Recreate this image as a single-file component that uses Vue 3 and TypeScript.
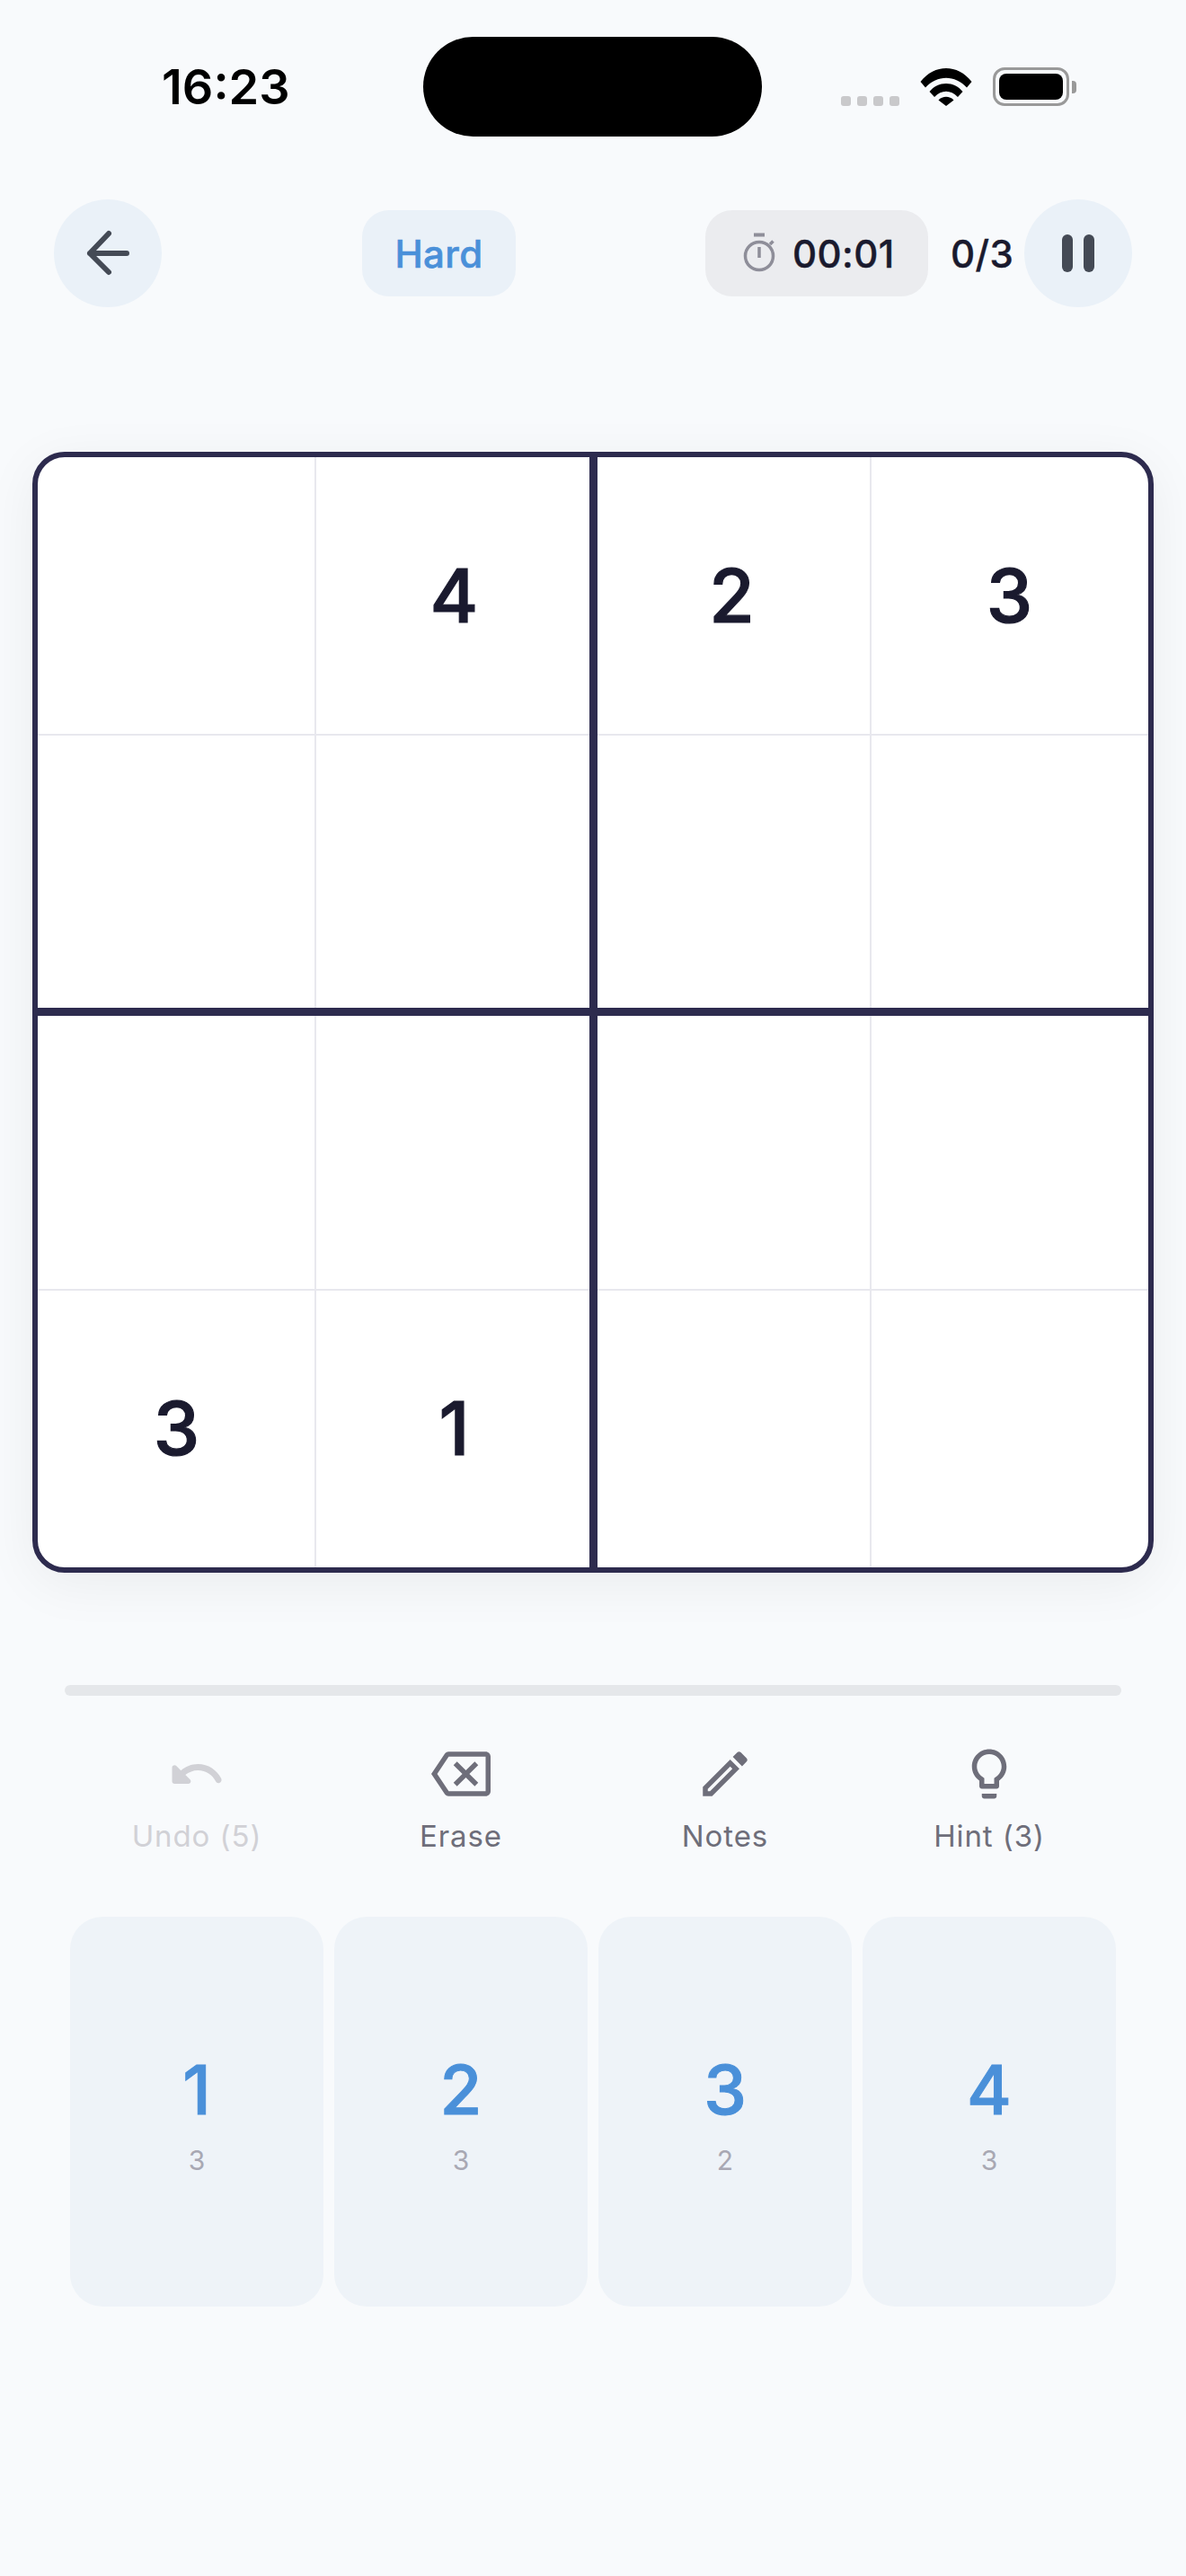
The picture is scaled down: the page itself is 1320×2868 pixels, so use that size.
<script setup lang="ts">
const board: number[] = [
  0, 4, 2, 3,
  0, 0, 0, 0,
  0, 0, 0, 0,
  3, 1, 0, 0,
]

const actions = [
  { label: 'Undo (5)', off: true, d: 'M12.5 8c-2.65 0-5.05 1-6.9 2.6L3.71 8.71C3.08 8.08 2 8.52 2 9.41V15c0 .55.45 1 1 1h5.59c.89 0 1.34-1.08.71-1.71l-1.91-1.91c1.39-1.16 3.16-1.88 5.12-1.88 3.16 0 5.88 1.84 7.16 4.5.27.56.91.84 1.5.64.71-.23 1.07-1.04.75-1.72C20.23 10.42 16.65 8 12.5 8z' },
  { label: 'Erase', off: false, d: 'M22 3H7c-.69 0-1.23.35-1.59.88L0 12l5.41 8.11c.36.53.9.89 1.59.89h15c1.1 0 2-.9 2-2V5c0-1.1-.9-2-2-2zm0 16H7.07L2.4 12l4.66-7H22v14zm-11.59-2L14 13.41 17.59 17 19 15.59 15.41 12 19 8.41 17.59 7 14 10.59 10.41 7 9 8.41 12.59 12 9 15.59z' },
  { label: 'Notes', off: false, d: 'M14.06 9.02l.92.92L5.92 19H5v-.92l9.06-9.06M17.66 3c-.25 0-.51.1-.7.29l-1.83 1.83 3.75 3.75 1.83-1.83c.39-.39.39-1.02 0-1.41l-2.34-2.34c-.2-.2-.45-.29-.71-.29zm-3.6 3.19L3 17.25V21h3.75L17.81 9.94l-3.75-3.75z' },
  { label: 'Hint (3)', off: false, d: 'M9 21c0 .55.45 1 1 1h4c.55 0 1-.45 1-1v-1H9v1zm3-19C8.14 2 5 5.14 5 9c0 2.38 1.19 4.47 3 5.74V17c0 .55.45 1 1 1h6c.55 0 1-.45 1-1v-2.26c1.81-1.27 3-3.36 3-5.74 0-3.86-3.14-7-7-7zm2.85 11.1l-.85.6V16h-4v-2.3l-.85-.6C7.8 12.16 7 10.63 7 9c0-2.76 2.24-5 5-5s5 2.24 5 5c0 1.63-.8 3.16-2.15 4.1z' },
]

const keys = [
  { n: 1, left: 3 },
  { n: 2, left: 3 },
  { n: 3, left: 2 },
  { n: 4, left: 3 },
]
</script>

<template>
  <div class="screen">
    <div class="status">
      <span class="time">16:23</span>
      <div class="island"></div>
      <div class="status-right">
        <div class="signal"><i></i><i></i><i></i><i></i></div>
        <svg class="wifi" width="58" height="43" viewBox="0 0 58 43">
          <path d="M0.5 16 C16 -4 42 -4 57.5 16 L52 22.5 C39 8 19 8 6 22.5 Z" fill="#000" />
          <path d="M10.5 27 C20 15 38 15 47.5 27 L42 33 C34 24.5 24 24.5 16 33 Z" fill="#000" />
          <path d="M20.5 36.5 C25 31.5 33 31.5 37.5 36.5 L29 43 Z" fill="#000" />
        </svg>
        <div class="battery"><div class="battery-fill"></div></div>
        <div class="battery-nub"></div>
      </div>
    </div>

    <div class="header">
      <button class="round">
        <svg width="72" height="72" viewBox="0 0 72 72" fill="none" stroke="#444a55" stroke-width="6" stroke-linecap="round" stroke-linejoin="round">
          <path d="M57 36H16M37 14 16 36 37 57" />
        </svg>
      </button>
      <div class="level">Hard</div>
      <div class="header-right">
        <div class="timer">
          <svg width="48" height="48" viewBox="0 0 48 48" fill="none" stroke="#8e8e99" stroke-width="3.5">
            <circle cx="24" cy="27" r="15.5" />
            <path d="M24 17V29" />
            <path d="M18 3.5H30" stroke-width="4" />
            <path d="M36 14 39.5 10.5" />
          </svg>
          <span>00:01</span>
        </div>
        <span class="mistakes">0/3</span>
        <button class="round pause"><i></i><i></i></button>
      </div>
    </div>

    <div class="board">
      <div v-for="(v, i) in board" :key="i" class="cell">{{ v || '' }}</div>
      <div class="bar-v"></div>
      <div class="bar-h"></div>
    </div>

    <div class="progress"></div>

    <div class="actions">
      <div v-for="a in actions" :key="a.label" class="action" :class="{ off: a.off }">
        <svg width="66" height="66" viewBox="0 0 24 24" fill="currentColor"><path :d="a.d" /></svg>
        <span>{{ a.label }}</span>
      </div>
    </div>

    <div class="keys">
      <div v-for="k in keys" :key="k.n" class="key">
        <span class="key-num">{{ k.n }}</span>
        <span class="key-left">{{ k.left }}</span>
      </div>
    </div>
  </div>
</template>

<style>
html, body {
  background: #f8fafc;
}
</style>

<style scoped>
.screen {
  height: 2868px;
  background: #f8fafc;
  font-family: Inter, "Liberation Sans", sans-serif;
  color: #1a1a2e;
  overflow: hidden;
}

.status {
  position: relative;
  height: 222px;
  box-sizing: border-box;
  padding: 0 122px 0 180px;
  display: flex;
  justify-content: space-between;
}
.time {
  margin-top: 65px;
  height: 63px;
  line-height: 63px;
  font-size: 54px;
  font-weight: 600;
  color: #000;
}
.island {
  position: absolute;
  left: 471px;
  top: 41px;
  width: 377px;
  height: 111px;
  border-radius: 56px;
  background: #000;
}
.status-right {
  margin-top: 75px;
  height: 43px;
  display: flex;
  align-items: flex-end;
}
.signal {
  display: flex;
  gap: 7px;
  margin-right: 23px;
}
.signal i {
  width: 11px;
  height: 11px;
  border-radius: 3px;
  background: #c9c9cb;
}
.wifi {
  margin-right: 23px;
}
.battery {
  width: 85px;
  height: 43px;
  box-sizing: border-box;
  border: 3px solid #999;
  border-radius: 13px;
  padding: 4px;
}
.battery-fill {
  height: 100%;
  border-radius: 8px;
  background: #000;
}
.battery-nub {
  width: 5px;
  height: 14px;
  margin: 0 0 14px 3px;
  border-radius: 0 4px 4px 0;
  background: #999;
}

.header {
  height: 120px;
  padding: 0 60px;
  display: flex;
  align-items: center;
  justify-content: space-between;
}
.round {
  width: 120px;
  height: 120px;
  padding: 0;
  border: 0;
  border-radius: 50%;
  background: #eaf1f8;
  display: flex;
  align-items: center;
  justify-content: center;
}
.level {
  margin-left: 12px;
  width: 171px;
  height: 96px;
  border-radius: 30px;
  background: #eaf1f8;
  color: #4a90d9;
  font-size: 42px;
  font-weight: 500;
  letter-spacing: 0.4px;
  -webkit-text-stroke: 0.6px #4a90d9;
  display: flex;
  align-items: center;
  justify-content: center;
}
.header-right {
  display: flex;
  align-items: center;
}
.timer {
  width: 248px;
  height: 96px;
  box-sizing: border-box;
  padding-left: 36px;
  border-radius: 30px;
  background: #ebecef;
  display: flex;
  align-items: center;
  gap: 13px;
  font-size: 42px;
  font-weight: 500;
  letter-spacing: 0.4px;
  -webkit-text-stroke: 0.4px #1a1a2e;
}
.mistakes {
  margin: 0 12px 0 25px;
  width: 70px;
  font-size: 42px;
  font-weight: 500;
  letter-spacing: 0.4px;
  -webkit-text-stroke: 0.4px #1a1a2e;
}
.pause {
  gap: 12px;
}
.pause i {
  width: 12px;
  height: 42px;
  border-radius: 6px;
  background: #444a55;
}

.board {
  position: relative;
  width: 1248px;
  height: 1248px;
  box-sizing: border-box;
  margin: 161px 36px 0;
  border: 6px solid #2d2b4e;
  border-radius: 36px;
  background: #fff;
  box-shadow: 0 12px 60px rgba(0, 0, 0, 0.06);
  display: grid;
  grid-template-columns: repeat(4, 309px);
  grid-template-rows: repeat(4, 309px);
}
.cell {
  position: relative;
  display: flex;
  align-items: center;
  justify-content: center;
  font-size: 82px;
  font-weight: 500;
  -webkit-text-stroke: 1.2px #1a1a2e;
}
.cell:nth-child(4n + 1)::after,
.cell:nth-child(4n + 3)::after {
  content: "";
  position: absolute;
  top: 0;
  bottom: 0;
  right: -1px;
  width: 2px;
  background: #e8e8ee;
}
.cell:nth-child(-n + 4)::before,
.cell:nth-child(n + 9):nth-child(-n + 12)::before {
  content: "";
  position: absolute;
  left: 0;
  right: 0;
  bottom: -1px;
  height: 2px;
  background: #e8e8ee;
}
.bar-v {
  position: absolute;
  top: 0;
  bottom: 0;
  left: 613.5px;
  width: 9px;
  background: #2d2b4e;
}
.bar-h {
  position: absolute;
  left: 0;
  right: 0;
  top: 613px;
  height: 9px;
  background: #2d2b4e;
}

.progress {
  height: 12px;
  margin: 125px 72px 0;
  border-radius: 6px;
  background: #e5e7ea;
}

.actions {
  margin: 54px 72px 0;
  display: grid;
  grid-template-columns: repeat(4, 1fr);
}
.action {
  display: flex;
  flex-direction: column;
  align-items: center;
  gap: 16px;
  color: #6e6e7a;
  font-size: 33px;
  letter-spacing: 0.9px;
  line-height: 40px;
}
.action.off {
  color: #d1d1d6;
}

.keys {
  margin: 70px 78px 0;
  display: grid;
  grid-template-columns: repeat(4, 282px);
  gap: 12px;
}
.key {
  height: 434px;
  border-radius: 36px;
  background: #eef3f8;
  display: flex;
  flex-direction: column;
  align-items: center;
  justify-content: center;
  gap: 15px;
}
.key-num {
  font-size: 76px;
  font-weight: 500;
  line-height: 92px;
  color: #4a90d9;
  -webkit-text-stroke: 1px #4a90d9;
}
.key-left {
  font-size: 30px;
  line-height: 36px;
  color: #a8a8b3;
}
</style>
